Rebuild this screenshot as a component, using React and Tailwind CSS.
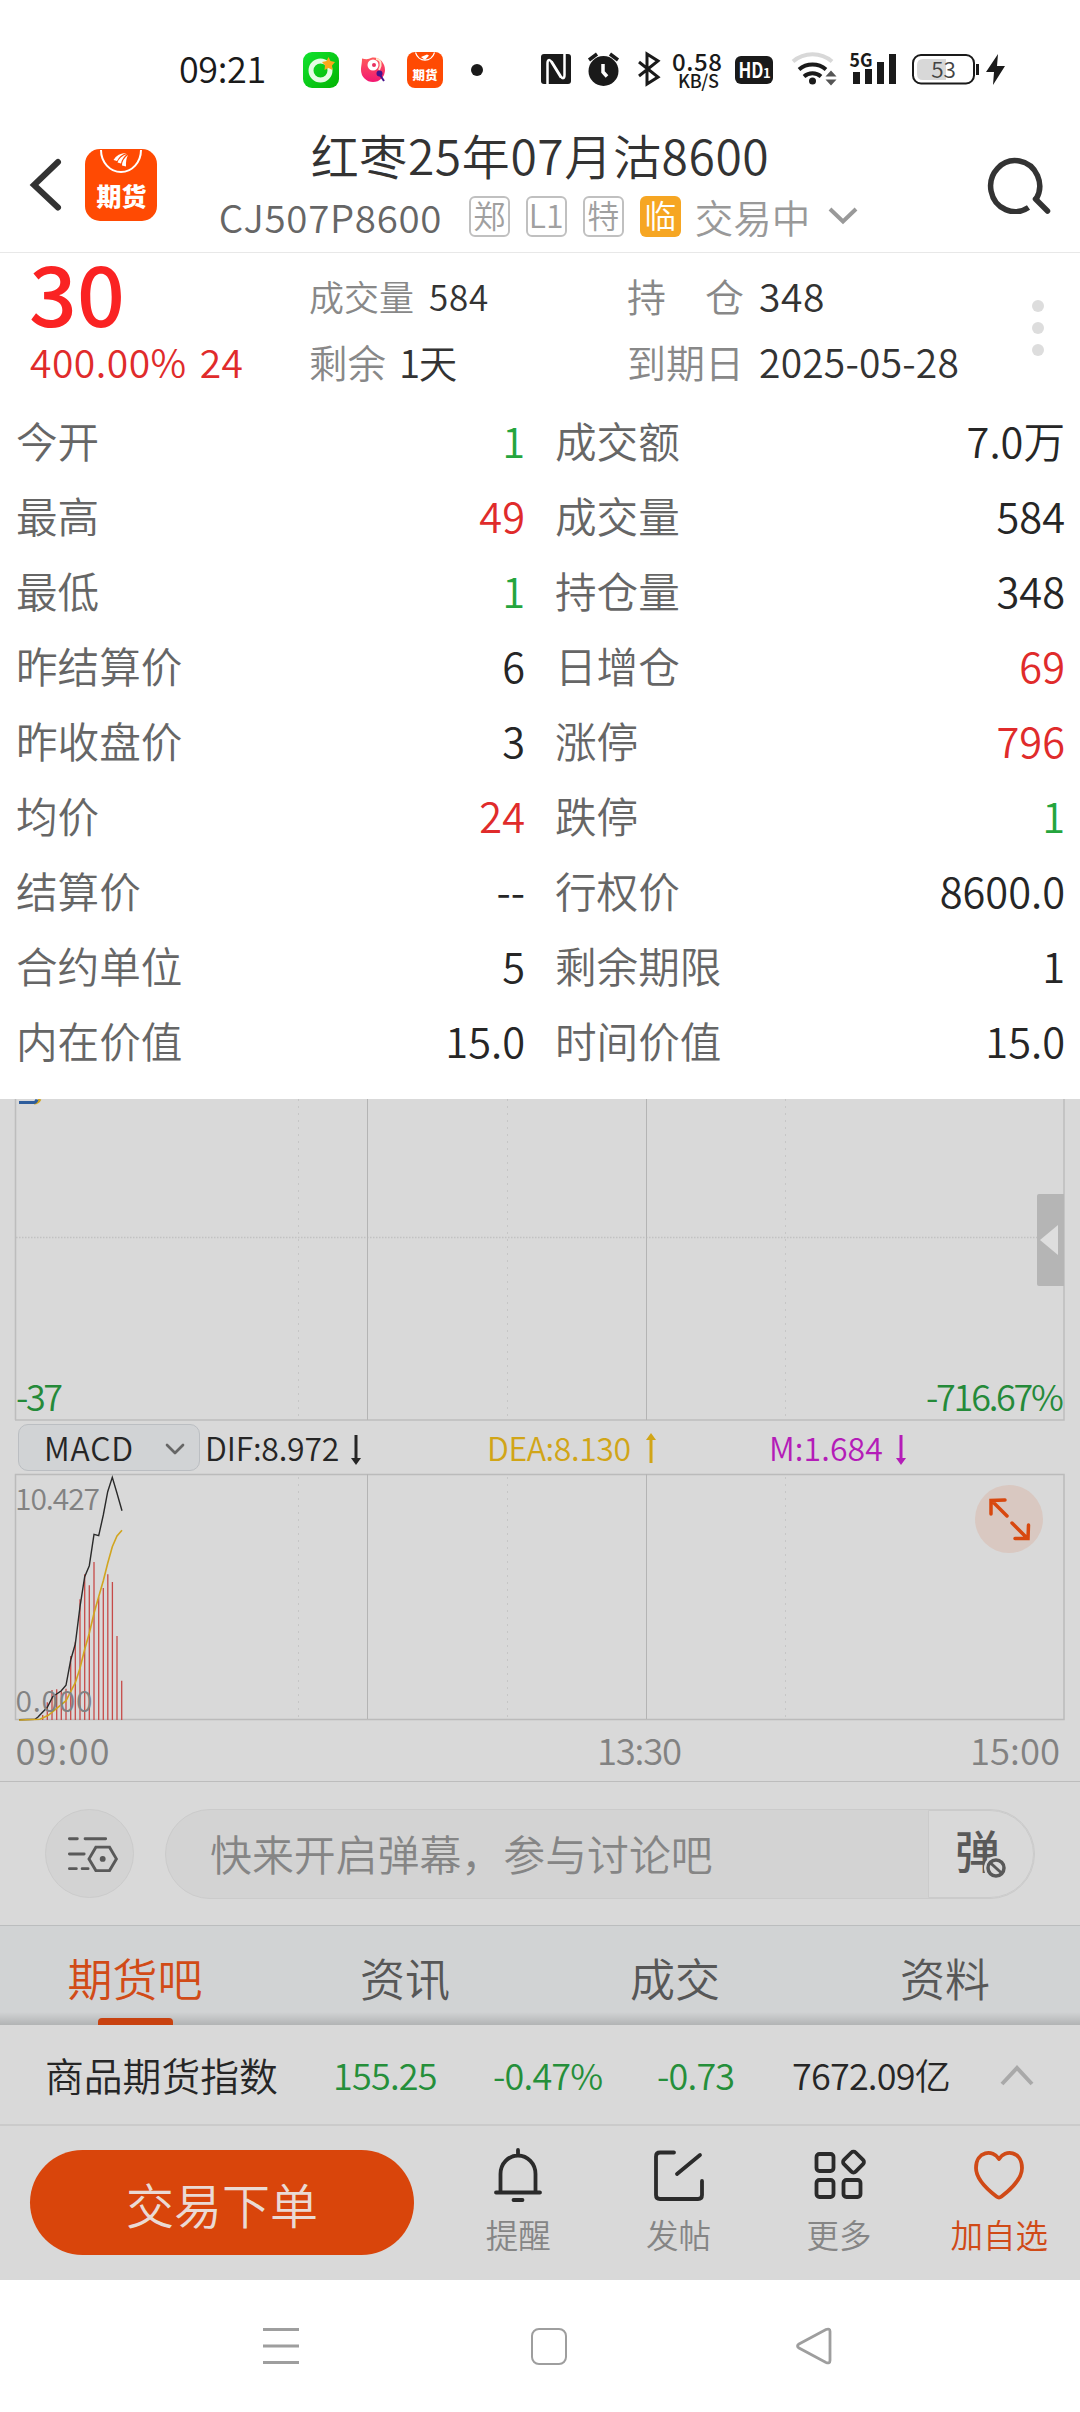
import { ChevronDown } from "lucide-react";

const RED = "text-[#e02b2b]";
const GREEN = "text-[#25a53d]";
const DARK = "text-[#262626]";

const rows = [
  ["今开", "1", GREEN, "成交额", "7.0万", DARK],
  ["最高", "49", RED, "成交量", "584", DARK],
  ["最低", "1", GREEN, "持仓量", "348", DARK],
  ["昨结算价", "6", DARK, "日增仓", "69", RED],
  ["昨收盘价", "3", DARK, "涨停", "796", RED],
  ["均价", "24", RED, "跌停", "1", GREEN],
  ["结算价", "--", DARK, "行权价", "8600.0", DARK],
  ["合约单位", "5", DARK, "剩余期限", "1", DARK],
  ["内在价值", "15.0", DARK, "时间价值", "15.0", DARK],
];

// [x, top] of every histogram bar
const macdBars = [
  [42.7, 241], [47.3, 228.3], [52, 216], [56.7, 215.3], [61.3, 217.3], [66, 214.7],
  [70.7, 182], [75.3, 167.7], [80, 125.3], [84.7, 100.3], [89.3, 111.3], [94, 88],
  [98.7, 123.3], [103.3, 114], [107.8, 100.3], [112.4, 108], [117, 162], [121.7, 206.7],
];

const difLine =
  "19,245.7 35,245.3 38,243 47.3,233.3 52.7,222.7 61.3,216.7 66,211.3 70.7,186 75.3,170 80,132.7 84.7,102.7 89.3,91.7 94,60.3 98.7,61.7 103.3,41 107.7,17.7 112.3,3.3 117,19.3 122,36.7";
const deaLine =
  "19,246 40,245.3 48.3,241.3 56.7,234.3 66,226.7 70.7,217.7 75.3,208.7 80,194.3 84.7,175.3 89.3,159.3 94,139.3 98.7,122.7 103.3,106.7 107.7,89.3 112.3,72.7 117,62 122,56.3";

const tabs = ["期货吧", "资讯", "成交", "资料"];

function AppBadge({ className }) {
  return (
    <svg viewBox="0 0 72 72" className={className}>
      <rect width="72" height="72" rx="15" fill="#ff4a03" />
      <path d="M16 1a20 22 0 0 0 40 0" fill="none" stroke="#fff" strokeWidth="2" />
      <path d="M28.500 11q4-7 13-7-7 2-9.500 8zM32.500 13.500q2-6 9.500-8.500-5 4-6 9.500zM37 16.500q0-6 6-10.500-2.500 5-2 11.500z" fill="#fff" />
      <text x="36.5" y="57" textAnchor="middle" fontSize="25" fontWeight="900" fill="#fff">期货</text>
    </svg>
  );
}

function StatusBar() {
  return (
    <div className="flex h-[110px] pl-[179px] text-[#1a1a1a]">
      <span className="mt-[49px] w-[124px] text-[36px] leading-[36px] tracking-[-0.4px]">09:21</span>
      <svg viewBox="303 30 720 70" className="mt-[30px] h-[70px] w-[720px]">
        <defs>
          <linearGradient id="lime" x1="0" y1="0" x2="1" y2="1">
            <stop offset="0" stopColor="#12e32f" />
            <stop offset="1" stopColor="#02b302" />
          </linearGradient>
          <linearGradient id="pink" x1="0" y1="0" x2="0" y2="1">
            <stop offset="0" stopColor="#ff5a5a" />
            <stop offset="1" stopColor="#f31772" />
          </linearGradient>
        </defs>
        <rect x="303" y="52" width="36" height="36" rx="9" fill="url(#lime)" />
        <circle cx="320.500" cy="70.500" r="9.500" fill="none" stroke="#e4fbe4" strokeWidth="5" />
        <path d="M328.500 57l2 4 4.500 1-3 3.500.500 4.500-4-2-4 2 .500-4.500-3-3.500 4.500-1z" fill="#f9a81b" />
        <path d="M362 58.500q6 1.500 9-.500c7-2 14 4 14 12a12 12 0 0 1-24 0c0-4 1-6 1-11.500z" fill="url(#pink)" />
        <circle cx="373" cy="65" r="5.500" fill="#fff" />
        <circle cx="374" cy="65" r="2" fill="#e8305f" />
        <path d="M376 59c5 0 6 6 3 11" fill="none" stroke="#ffe3c9" strokeWidth="2" />
        <circle cx="379.500" cy="73.500" r="3" fill="#46128d" />
        <path d="M380 75l4 6" stroke="#46128d" strokeWidth="2" />
        <rect x="407" y="52" width="36" height="36" rx="8" fill="#ff4a03" />
        <path d="M415.500 52.500a10 11 0 0 0 19 0" fill="none" stroke="#fff" strokeWidth="1.200" />
        <path d="M421 57l6-2.500 2 1-4 4.500z" fill="#fff" />
        <text x="425" y="80" textAnchor="middle" fontSize="12.500" fontWeight="900" fill="#fff">期货</text>
        <circle cx="477" cy="70" r="6" fill="#1a1a1a" />

        <rect x="541" y="54" width="30" height="30" rx="3" fill="#1a1a1a" />
        <path d="M547.500 84V63.500c0-4 2-4.500 4-1.500l9.500 15.500M564.500 54v21c0 4-2 4-4 1l-9-14.500" fill="none" stroke="#fff" strokeWidth="2.500" />
        <circle cx="603.500" cy="71" r="15" fill="#1a1a1a" />
        <path d="M589 60l8-6M618 60l-8-6" stroke="#1a1a1a" strokeWidth="3.500" />
        <path d="M603 64v8l4 4.500" fill="none" stroke="#fff" strokeWidth="3.500" />
        <path d="M639 62l19 15-11 7V54l11 7-19 15" fill="none" stroke="#1a1a1a" strokeWidth="3" />
        <text x="697" y="70.500" textAnchor="middle" fontSize="24" fontWeight="500" fill="#1a1a1a" textLength="50">0.58</text>
        <text x="698.500" y="87.500" textAnchor="middle" fontSize="18" fontWeight="500" fill="#1a1a1a" textLength="41">KB/S</text>
        <rect x="735" y="56" width="38" height="28" rx="6" fill="#1a1a1a" />
        <text x="738.500" y="78" fontSize="21" fontWeight="700" fill="#fff" textLength="25" lengthAdjust="spacingAndGlyphs">HD</text>
        <text x="763" y="78" fontSize="13" fontWeight="700" fill="#fff">1</text>
        <path d="M793 61.500a30 30 0 0 1 39 0" fill="none" stroke="#d8d8d8" strokeWidth="4" />
        <path d="M799 69.500a21 21 0 0 1 27 0" fill="none" stroke="#1a1a1a" strokeWidth="4" />
        <path d="M804 76.500a13 13 0 0 1 17 0" fill="none" stroke="#1a1a1a" strokeWidth="4" />
        <circle cx="812.500" cy="81" r="3.500" fill="#1a1a1a" />
        <path d="M825.500 76.500l5.500-6 5.500 6zM825.500 79.500l5.500 6 5.500-6z" fill="#555" />
        <text x="849.500" y="66.500" fontSize="19" fontWeight="700" fill="#1a1a1a" textLength="23" lengthAdjust="spacingAndGlyphs">5G</text>
        <path d="M853 72h7v12h-7zM865 69h7v15h-7zM877 62h7v22h-7zM889 54h7v30h-7z" fill="#1a1a1a" />
        <rect x="913" y="55" width="61" height="28.500" rx="8" fill="none" stroke="#1a1a1a" strokeWidth="2" />
        <path d="M923 59h23v21h-23q-6 0-6-6v-9q0-6 6-6z" fill="#d8d8d8" />
        <path d="M977.500 64v11" stroke="#1a1a1a" strokeWidth="3" />
        <text x="943.500" y="77.500" textAnchor="middle" fontSize="22.500" fill="#444">53</text>
        <path d="M998 54l-12 18h8l-1 13 12-19h-8z" fill="#1a1a1a" />
      </svg>
    </div>
  );
}

function Tag({ children, solid }) {
  return (
    <span
      className={`flex h-[41px] w-[41px] items-center justify-center rounded-[6px] text-[32px] leading-none ${
        solid ? "bg-[#f6a623] text-white" : "border-2 border-[#c0c0c0] text-[#a0a0a0]"
      }`}
    >
      <span className="-mt-[4px]">{children}</span>
    </span>
  );
}

function Header() {
  return (
    <div className="flex h-[143px] border-b border-[#e8e8e8]">
      <svg viewBox="0 0 85 143" className="h-[143px] w-[85px] shrink-0">
        <path d="M58 52L34 75 58 97.500" fill="none" stroke="#333" strokeWidth="6" strokeLinecap="round" />
      </svg>
      <AppBadge className="mt-[39px] h-[72px] w-[72px] shrink-0" />
      <div className="flex w-[766px] shrink-0 flex-col items-center pt-[14px]">
        <div className="h-[60px] text-[48px] leading-[60px] tracking-[0.6px] whitespace-nowrap text-[#333]">
          红枣25年07月沽8600
        </div>
        <div className="mt-[11px] flex h-[42px] items-center whitespace-nowrap">
          <span className="w-[250px] text-[38.5px] leading-[42px] tracking-[0.7px] text-[#666]">CJ507P8600</span>
          <div className="flex gap-4">
            <Tag>郑</Tag>
            <Tag>L1</Tag>
            <Tag>特</Tag>
            <Tag solid>临</Tag>
          </div>
          <span className="ml-[14px] text-[38.5px] leading-[42px] text-[#999]">交易中</span>
          <svg viewBox="0 0 30 20" className="mr-[3px] ml-[18px] h-[20px] w-[30px]">
            <path d="M2 3l13 12.500L28 3" fill="none" stroke="#999" strokeWidth="4" />
          </svg>
        </div>
      </div>
      <svg viewBox="-5 0 65 60" className="mt-[44px] ml-[64px] h-[60px] w-[65px] shrink-0">
        <path d="M36.500 53.500A24.500 25.500 0 1 1 44 45.500" fill="none" stroke="#333" strokeWidth="5.500" />
        <path d="M43.500 45L55.500 57" stroke="#333" strokeWidth="5.500" strokeLinecap="round" />
      </svg>
    </div>
  );
}

function Quote() {
  return (
    <div className="flex h-[150px] whitespace-nowrap">
      <div className="w-[279px] pl-[29px]">
        <div className="h-[76px] text-[84px] leading-[76px] font-medium text-[#fa2323]">30</div>
        <div className={`h-[64px] pl-[1px] text-[39px] leading-[64px] tracking-[0.5px] ${RED}`}>
          400.00%<span className="ml-[13px]">24</span>
        </div>
      </div>
      <div className="w-[318px] pl-[30px] text-[#888]">
        <div className="h-[76px] pt-[9px] text-[35px] leading-[67px]">
          成交量<span className="ml-[15px] tracking-[0.8px] text-[#333]">584</span>
        </div>
        <div className="h-[64px] text-[38.5px] leading-[64px]">
          剩余<span className="ml-[13px] tracking-[-1.5px] text-[#333]">1天</span>
        </div>
      </div>
      <div className="w-[405px] pl-[30px] text-[39px] text-[#888]">
        <div className="flex h-[76px] pt-[9px] leading-[67px]">
          <span className="flex w-[117px] justify-between"><span>持</span><span>仓</span></span>
          <span className="ml-[15px] tracking-[0.6px] text-[#333]">348</span>
        </div>
        <div className="h-[64px] leading-[64px]">
          到期日<span className="ml-[15px] tracking-[0.2px] text-[#333]">2025-05-28</span>
        </div>
      </div>
      <div className="flex flex-col gap-[10px] pt-[47px] pl-[30px]">
        <i className="h-[12px] w-[12px] rounded-full bg-[#ddd]" />
        <i className="h-[12px] w-[12px] rounded-full bg-[#ddd]" />
        <i className="h-[12px] w-[12px] rounded-full bg-[#ddd]" />
      </div>
    </div>
  );
}

function Details() {
  return (
    <div className="h-[696px] pr-[15px] pl-[16px]">
      {rows.map(([l1, v1, c1, l2, v2, c2]) => (
        <div key={l1} className="flex h-[75px] text-[41.6px] leading-[75px] text-[#666]">
          <div className="flex w-[509px] justify-between">
            <span>{l1}</span>
            <span className={c1}>{v1}</span>
          </div>
          <div className="ml-[30px] flex flex-1 justify-between">
            <span>{l2}</span>
            <span className={c2}>{v2}</span>
          </div>
        </div>
      ))}
    </div>
  );
}

function Arrow({ up, className }) {
  return (
    <svg viewBox="0 0 10 30" className={`h-[30px] w-[10px] ${className}`}>
      <path d={up ? "M5 5v25" : "M5 0v25"} stroke="currentColor" strokeWidth="3" />
      <path d={up ? "M0 7l5-7 5 7z" : "M0 23l5 7 5-7z"} fill="currentColor" />
    </svg>
  );
}

function Charts() {
  return (
    <div>
      <div className="relative">
        <svg viewBox="0 0 1080 323" className="block h-[323px] w-[1080px]">
          <path d="M298.500 0v321M507.500 0v321M785.500 0v321" stroke="#c6c6c6" strokeDasharray="2 5" />
          <path d="M16 138.500H1064" stroke="#c2c2c2" strokeWidth="1.500" strokeDasharray="1.500 1.500" />
          <path d="M15.500 0v321M1064 0v321H15" fill="none" stroke="#bdbdbd" strokeWidth="1.500" />
          <path d="M367.500 0v321M646.500 0v321" stroke="#b4b4b4" />
          <path d="M34 4q4 0 6-4" fill="none" stroke="#d1a520" strokeWidth="3" />
          <path d="M19 3.500h15q2 0 3-3" fill="none" stroke="#2e5d9c" strokeWidth="3" />
          <text x="16" y="312" fontSize="36" fill="#258a39" textLength="47">-37</text>
          <text x="1064" y="312" textAnchor="end" fontSize="36" fill="#258a39" textLength="138">-716.67%</text>
        </svg>
        <div className="absolute top-[95px] right-[16px] flex h-[92px] w-[27px] items-center justify-end rounded-l-[2px] bg-[#b5b5b5] pr-[6px]">
          <svg viewBox="0 0 18 30" className="h-[30px] w-[18px]">
            <path d="M18 0v30L0 15z" fill="#dedede" />
          </svg>
        </div>
      </div>

      <div className="flex h-[51px] pl-[18px] text-[32px] leading-[43px] whitespace-nowrap">
        <div className="mt-[2px] flex h-[47px] w-[182px] items-center justify-between rounded-[10px] border border-[#bbbec2] bg-[#d1d3d5] pr-[8px] pl-[25px] tracking-[0.8px] text-[#262626]">
          MACD
          <ChevronDown className="mt-[2px] h-[32px] w-[32px] text-[#666]" strokeWidth={2} />
        </div>
        <div className="flex w-[282px] items-center pl-[5px] text-[#262626]">
          <span className="w-[146px] tracking-[-0.2px]">DIF:8.972</span>
          <Arrow className="mt-[4px]" />
        </div>
        <div className="flex w-[282px] items-center pl-[5px] text-[#d1a517]">
          <span className="w-[159px] tracking-[-0.4px]">DEA:8.130</span>
          <Arrow up className="mt-[1px]" />
        </div>
        <div className="flex items-center pl-[5px] text-[#b41cb8]">
          <span className="w-[127px] tracking-[0.1px]">M:1.684</span>
          <Arrow className="mt-[4px]" />
        </div>
      </div>

      <div className="relative">
        <svg viewBox="0 -1 1080 308" className="block h-[308px] w-[1080px]">
          <path d="M298.500 3v242M507.500 3v242M785.500 3v242" stroke="#c6c6c6" strokeDasharray="2 5" />
          <path d="M15.500 .500H1064V245.500H15.500z" fill="none" stroke="#bbb" strokeWidth="1.500" />
          <path d="M367.500 0v245M646.500 0v245" stroke="#b4b4b4" />
          {macdBars.map(([x, top]) => (
            <path key={x} d={`M${x} ${top}V246`} stroke="#c64a48" strokeWidth="1.300" />
          ))}
          <polyline points={difLine} fill="none" stroke="#2a2a2a" strokeWidth="1.400" />
          <polyline points={deaLine} fill="none" stroke="#d1a520" strokeWidth="1.600" />
          <g fill="#828282">
            <text x="15" y="35.500" fontSize="30" textLength="85">10.427</text>
            <text x="15.500" y="238" fontSize="30" textLength="77">0.000</text>
            <text x="15.500" y="291" fontSize="36.500" textLength="94">09:00</text>
            <text x="597" y="291" fontSize="36.500" textLength="85">13:30</text>
            <text x="970" y="291" fontSize="36.500" textLength="90">15:00</text>
          </g>
        </svg>
        <div className="absolute top-[12px] right-[37px] h-[68px] w-[68px] rounded-full bg-[#d9c8c1]">
          <svg viewBox="0 0 68 68" className="h-full w-full">
            <path
              d="M16 29V15.500L30 15M17 16l15 15M37 38l15 15M40 53.500H53L53.500 40"
              fill="none"
              stroke="#d8480f"
              strokeWidth="3.500"
              strokeLinecap="round"
            />
          </svg>
        </div>
      </div>
    </div>
  );
}

function Danmu() {
  return (
    <div className="flex h-[144px] items-center border-t border-[#bdbdbd] pl-[45px]">
      <div className="h-[89px] w-[89px] rounded-full border-[1.5px] border-[#cbcbcb] bg-[#d3d3d3]">
        <svg viewBox="45 1809 89 89" className="h-full w-full">
          <g fill="none" stroke="#595959" strokeWidth="3" strokeLinecap="round">
            <path d="M69 1838.500h8M85 1838.500h21M69 1854h15M69 1869h7M82 1869h6" />
            <path d="M96 1847h14l7 12-7 12H96l-7-12z" />
          </g>
          <circle cx="103" cy="1859" r="3" fill="#595959" />
        </svg>
      </div>
      <div className="ml-[31px] flex h-[90px] w-[870px] overflow-hidden rounded-full border-[1.5px] border-[#cbcbcb] bg-[#d3d3d3]">
        <span className="w-[762px] pl-[44px] text-[41.9px] leading-[86px] whitespace-nowrap text-[#858585]">
          快来开启弹幕，参与讨论吧
        </span>
        <div className="relative flex-1 rounded-r-full border-[1.5px] border-[#cbcbcb] bg-[#d9d9d9] pl-[26px] text-[45px] leading-[77px] font-medium text-[#595959]">
          弹
          <svg viewBox="0 0 24 24" className="absolute top-[45px] left-[55px] h-[24px] w-[24px]">
            <circle cx="12" cy="12" r="12" fill="#d9d9d9" />
            <circle cx="12" cy="12" r="8" fill="none" stroke="#595959" strokeWidth="3.500" />
            <path d="M6.500 7l11 10" stroke="#595959" strokeWidth="3" />
          </svg>
        </div>
      </div>
    </div>
  );
}

function Tabs() {
  return (
    <div className="relative grid h-[100px] grid-cols-4 border-t border-[#bbbdbe] bg-[#d1d3d4] text-center text-[45px] leading-[104px] text-[#575757]">
      {tabs.map((t, i) => (
        <div key={t} className={i === 0 ? "text-[#d14b17]" : ""}>
          {t}
        </div>
      ))}
      <div className="absolute inset-x-0 bottom-0 h-[13px] bg-linear-to-b from-transparent to-black/15" />
      <i className="absolute bottom-0 left-[98px] h-[7px] w-[75px] rounded-t-[4px] bg-[#c84210]" />
    </div>
  );
}

function IndexStrip() {
  return (
    <div className="flex h-[101px] border-b-2 border-[#cbcbcb] text-[36px] leading-[98px] tracking-[-0.8px] whitespace-nowrap text-[#258f3a]">
      <span className="w-[333px] pl-[45px] text-[38.8px] tracking-normal text-[#262626]">商品期货指数</span>
      <span className="w-[160px]">155.25</span>
      <span className="w-[164px]">-0.47%</span>
      <span className="w-[135px]">-0.73</span>
      <span className="w-[208px] text-[#262626]">7672.09亿</span>
      <svg viewBox="0 0 34 22" className="mt-[39px] h-[22px] w-[34px]">
        <path d="M2 20L17 4l15 16" fill="none" stroke="#a9a9a9" strokeWidth="4" />
      </svg>
    </div>
  );
}

function Action({ label, active, children }) {
  return (
    <div className={`flex w-[160.400px] flex-col items-center ${active ? "text-[#d04a17]" : "text-[#858585]"}`}>
      <svg viewBox="0 0 54 54" className={`mt-[22px] h-[54px] w-[54px] ${active ? "" : "text-[#2b2b2b]"}`}>
        <g fill="none" stroke="currentColor" strokeWidth="3.800" strokeLinecap="round" strokeLinejoin="round">
          {children}
        </g>
      </svg>
      <span className="mt-[12px] text-[32.5px] leading-[40px]">{label}</span>
    </div>
  );
}

function BottomBar() {
  return (
    <div className="flex h-[154px] pl-[30px]">
      <button className="mt-[24px] h-[105px] w-[384px] rounded-full bg-[#d9450b] text-[48px] leading-[100px] text-[#eadad4]">
        交易下单
      </button>
      <div className="ml-[24px] flex">
        <Action label="提醒">
          <path d="M27 2v5M9.500 44V26a17.500 18.500 0 0 1 35 0V44M5 44.500H49M22.500 52h9" />
        </Action>
        <Action label="发帖">
          <path d="M22 4.500H8q-4 0-4 4V47q0 4 4 4H46q4 0 4-4V33M25 26L48 7" />
        </Action>
        <Action label="更多">
          <rect x="4.500" y="6" width="17" height="17" rx="3" />
          <rect x="4.500" y="32" width="17" height="17" rx="3" />
          <rect x="31.500" y="32" width="17" height="17" rx="3" />
          <rect x="33.300" y="5.800" width="16.500" height="16.500" rx="3" transform="rotate(45 41.500 14)" />
        </Action>
        <Action label="加自选" active>
          <path d="M27 11C21 1 4 3 4 20c0 12 12 22 20.500 28.500q2.500 2 5 0C38 42 50 32 50 20 50 3 33 1 27 11z" />
        </Action>
      </div>
    </div>
  );
}

function NavBar() {
  return (
    <div className="flex h-[132px] items-center bg-white pl-[263px]">
      <svg viewBox="0 0 36 36" className="h-[36px] w-[36px]">
        <path d="M0 1.500h36M0 18h36M0 34.500h36" stroke="#9e9e9e" strokeWidth="3" />
      </svg>
      <div className="ml-[232px] h-[37px] w-[36px] rounded-[8px] border-[2.500px] border-[#9e9e9e]" />
      <svg viewBox="0 0 36 38" className="ml-[229px] h-[38px] w-[36px]">
        <path d="M3 17L30 2.500q4-1.500 4 2v29q0 3.500-4 2L3 21q-3-2 0-4z" fill="none" stroke="#9e9e9e" strokeWidth="2.800" />
      </svg>
    </div>
  );
}

export default function App() {
  return (
    <div className="h-[2412px] w-[1080px] overflow-hidden bg-white font-['Noto_Sans_CJK_SC',sans-serif] font-[350]">
      <StatusBar />
      <Header />
      <Quote />
      <Details />
      <div className="h-[1181px] bg-[#d9d9d9]">
        <Charts />
        <Danmu />
        <Tabs />
        <IndexStrip />
        <BottomBar />
      </div>
      <NavBar />
    </div>
  );
}
